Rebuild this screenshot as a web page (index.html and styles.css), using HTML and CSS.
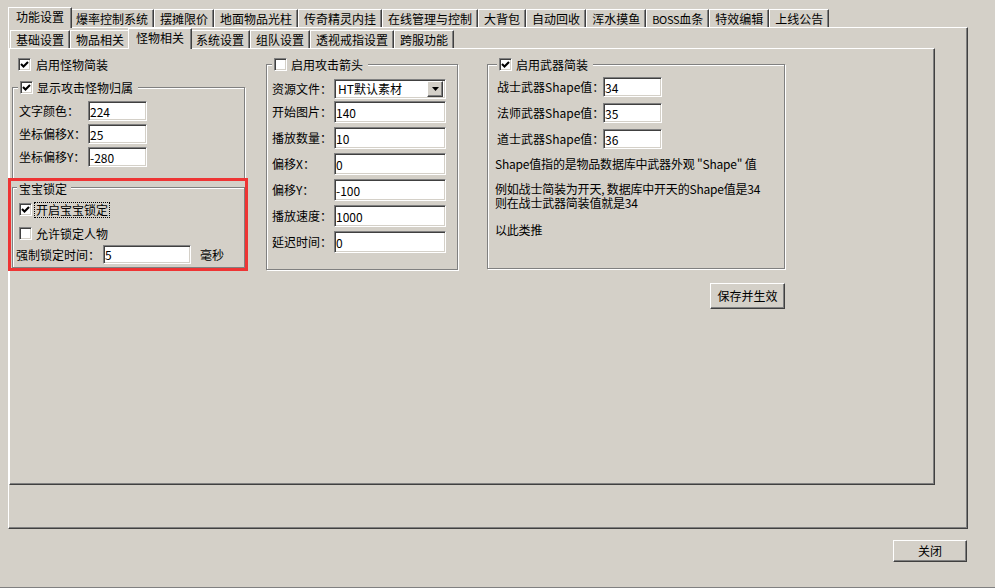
FILE: index.html
```html
<!DOCTYPE html>
<html lang="zh-CN">
<head>
  <meta charset="UTF-8" />
  <title>功能设置</title>
  <link rel="stylesheet" href="styles.css">
</head>
<body>
  <div class="window">
    <div class="tabs outer-tabs">
      <span class="tab on">功能设置</span>
      <span class="tab">爆率控制系统</span>
      <span class="tab">摆摊限价</span>
      <span class="tab">地面物品光柱</span>
      <span class="tab">传奇精灵内挂</span>
      <span class="tab">在线管理与控制</span>
      <span class="tab">大背包</span>
      <span class="tab">自动回收</span>
      <span class="tab">浑水摸鱼</span>
      <span class="tab"><span class="lat">BOSS</span>血条</span>
      <span class="tab">特效编辑</span>
      <span class="tab">上线公告</span>
    </div>

    <div class="panel outer-panel">
      <div class="tabs inner-tabs">
        <span class="tab">基础设置</span>
        <span class="tab">物品相关</span>
        <span class="tab on">怪物相关</span>
        <span class="tab">系统设置</span>
        <span class="tab">组队设置</span>
        <span class="tab">透视戒指设置</span>
        <span class="tab">跨服功能</span>
      </div>

      <div class="panel inner-panel">
        <div class="cols">

          <!-- left column -->
          <div class="col col-left">
            <label class="check first-check">
              <span class="cb"><svg width="13" height="13" viewBox="0 0 13 13"><polyline points="3,6 5.5,8.5 10,4" fill="none" stroke="#000" stroke-width="2.1"/></svg></span>
              启用怪物简装
            </label>

            <div class="group g-owner">
              <label class="check group-title">
                <span class="cb"><svg width="13" height="13" viewBox="0 0 13 13"><polyline points="3,6 5.5,8.5 10,4" fill="none" stroke="#000" stroke-width="2.1"/></svg></span>
                显示攻击怪物归属
              </label>
              <div class="group-body">
                <div class="row"><span class="lbl">文字颜色：</span><input class="edit" type="text" value="224"></div>
                <div class="row"><span class="lbl">坐标偏移X：</span><input class="edit" type="text" value="25"></div>
                <div class="row"><span class="lbl">坐标偏移Y：</span><input class="edit" type="text" value="-280"></div>
              </div>
            </div>

            <div class="group g-lock mark">
              <div class="group-title text-title">宝宝锁定</div>
              <div class="group-body">
                <label class="check">
                  <span class="cb"><svg width="13" height="13" viewBox="0 0 13 13"><polyline points="3,6 5.5,8.5 10,4" fill="none" stroke="#000" stroke-width="2.1"/></svg></span>
                  <span class="focus">开启宝宝锁定</span>
                </label>
                <label class="check">
                  <span class="cb"></span>
                  允许锁定人物
                </label>
                <div class="row lock-row">
                  <span class="lbl">强制锁定时间：</span><input class="edit" type="text" value="5"><span class="unit">毫秒</span>
                </div>
              </div>
            </div>
          </div>

          <!-- middle column -->
          <div class="col col-mid">
            <div class="group g-arrow">
              <label class="check group-title">
                <span class="cb"></span>
                启用攻击箭头
              </label>
              <div class="group-body">
                <div class="row combo-row">
                  <span class="lbl">资源文件：</span>
                  <div class="combo">
                    <span class="combo-text">HT默认素材</span>
                    <span class="drop"><svg width="7" height="4" viewBox="0 0 7 4"><polygon points="0,0 7,0 3.5,4" fill="#000"/></svg></span>
                  </div>
                </div>
                <div class="row"><span class="lbl">开始图片：</span><input class="edit" type="text" value="140"></div>
                <div class="row"><span class="lbl">播放数量：</span><input class="edit" type="text" value="10"></div>
                <div class="row"><span class="lbl">偏移X：</span><input class="edit" type="text" value="0"></div>
                <div class="row"><span class="lbl">偏移Y：</span><input class="edit" type="text" value="-100"></div>
                <div class="row"><span class="lbl">播放速度：</span><input class="edit" type="text" value="1000"></div>
                <div class="row"><span class="lbl">延迟时间：</span><input class="edit" type="text" value="0"></div>
              </div>
            </div>
          </div>

          <!-- right column -->
          <div class="col col-right">
            <div class="group g-weapon">
              <label class="check group-title">
                <span class="cb"><svg width="13" height="13" viewBox="0 0 13 13"><polyline points="3,6 5.5,8.5 10,4" fill="none" stroke="#000" stroke-width="2.1"/></svg></span>
                启用武器简装
              </label>
              <div class="group-body">
                <div class="row"><span class="lbl">战士武器Shape值：</span><input class="edit" type="text" value="34"></div>
                <div class="row"><span class="lbl">法师武器Shape值：</span><input class="edit" type="text" value="35"></div>
                <div class="row"><span class="lbl">道士武器Shape值：</span><input class="edit" type="text" value="36"></div>
                <p class="note">Shape值指的是物品数据库中武器外观 "Shape" 值</p>
                <p class="note two">例如战士简装为开天, 数据库中开天的Shape值是34<br>则在战士武器简装值就是34</p>
                <p class="note last">以此类推</p>
              </div>
            </div>
            <button class="btn save-btn">保存并生效</button>
          </div>

        </div>
      </div>
    </div>

    <div class="footer">
      <button class="btn close-btn">关闭</button>
    </div>
  </div>
</body>
</html>
```

FILE: styles.css
```css
* {
  box-sizing: border-box;
}

html, body {
  margin: 0;
  padding: 0;
}

body {
  background: #d4d0c8;
  font-family: "Noto Sans CJK SC", "Liberation Sans", sans-serif;
  font-size: 12px;
  line-height: 14px;
  color: #000;
}

.window {
  height: 588px;
  display: flex;
  flex-direction: column;
  padding: 7px 27px 0 8px;
  border-bottom: 1px solid #808080;
}

/* tabs */
.tabs {
  display: flex;
  align-items: flex-end;
  height: 20px;
  padding-left: 2px;
}

.inner-tabs {
  padding-left: 1px;
}

.tab {
  height: 18px;
  padding: 0 5px;
  border-top: 1px solid #fff;
  border-left: 1px solid #fff;
  border-right: 1px solid #404040;
  box-shadow: inset -1px 0 #808080;
  line-height: 17px;
  white-space: nowrap;
}

.tab.on {
  height: 21px;
  margin: 0 -2px -1px;
  padding: 0 7px;
  position: relative;
  z-index: 1;
  background: #d4d0c8;
  line-height: 18px;
}

.lat {
  font-size: 11px;
  letter-spacing: -0.3px;
}

/* panels */
.panel {
  border: 1px solid;
  border-color: #fff #404040 #404040 #fff;
  box-shadow: inset -1px -1px #808080;
}

.outer-panel {
  height: 502px;
  padding: 0 32px 43px 0;
  display: flex;
  flex-direction: column;
}

.inner-panel {
  flex: 1;
}

.cols {
  display: flex;
  align-items: flex-start;
  padding: 9px 0 0 2px;
}

.col-left {
  width: 233px;
}

.col-mid {
  width: 192px;
  margin-left: 21px;
}

.col-right {
  width: 298px;
  margin-left: 29px;
  display: flex;
  flex-direction: column;
}

/* group boxes */
.group {
  border: 1px solid #808080;
  box-shadow: inset 1px 1px #fff, 1px 1px #fff;
}

.group-title {
  width: fit-content;
  height: 13px;
  margin: -7px 0 0 5px;
  padding: 0 5px 0 2px;
  background: #d4d0c8;
}

.text-title {
  height: 14px;
  margin: -6px 0 0 4px;
  padding: 0 4px 0 2px;
}

.group-body {
  display: flex;
  flex-direction: column;
}

/* check boxes */
.check {
  display: flex;
  align-items: center;
  gap: 4px;
  height: 13px;
  white-space: nowrap;
}

.cb {
  width: 13px;
  height: 13px;
  flex: none;
  border: 1px solid;
  border-color: #808080 #fff #fff #808080;
  box-shadow: inset 1px 1px #404040, inset -1px -1px #d4d0c8;
  background: #fff;
  position: relative;
}

.cb svg {
  position: absolute;
  left: -1px;
  top: -1px;
}

.first-check {
  margin-left: 6px;
  gap: 5px;
}

.focus {
  outline: 1px dotted #000;
  padding: 0 1px;
  margin-left: -1px;
}

/* form rows */
.row {
  display: flex;
  align-items: center;
  white-space: nowrap;
}

.edit {
  font: inherit;
  color: #000;
  background: #fff;
  border: 1px solid;
  border-color: #808080 #fff #fff #808080;
  box-shadow: inset 1px 1px #404040, inset -1px -1px #d4d0c8;
  padding: 0 1px;
  margin: 0;
  outline: none;
}

/* left groups */
.g-owner {
  margin-top: 16px;
}

.g-owner .group-body {
  padding: 7px 0 12px 6px;
  gap: 3px;
}

.g-owner .row {
  height: 20px;
}

.g-owner .lbl {
  width: 69px;
}

.g-owner .edit {
  width: 59px;
  height: 20px;
}

.g-lock {
  margin-top: 7px;
}

.g-lock .group-body {
  padding: 7px 0 3px 6px;
}

.g-lock .check + .check {
  margin-top: 11px;
}

.lock-row {
  height: 19px;
  margin: 5px 0 0 -3px;
}

.lock-row .lbl {
  width: 87px;
}

.lock-row .edit {
  width: 88px;
  height: 19px;
}

.unit {
  margin-left: 9px;
}

.mark {
  position: relative;
}

.mark::after {
  content: "";
  position: absolute;
  left: -5px;
  right: -4px;
  top: -10px;
  bottom: -4px;
  border: 3px solid #ee3434;
  pointer-events: none;
}

/* middle group */
.g-arrow {
  margin-top: 6px;
}

.g-arrow .group-body {
  padding: 8px 10px 12px 5px;
}

.g-arrow .row {
  height: 22px;
  margin-bottom: 4px;
}

.g-arrow .lbl {
  width: 62px;
}

.g-arrow .edit {
  width: 112px;
  height: 22px;
}

.g-arrow .combo-row {
  height: 20px;
  margin-bottom: 2px;
}

.combo {
  width: 112px;
  height: 20px;
  display: flex;
  align-items: center;
  justify-content: space-between;
  padding: 2px;
  border: 1px solid;
  border-color: #808080 #fff #fff #808080;
  box-shadow: inset 1px 1px #404040, inset -1px -1px #d4d0c8;
  background: #fff;
}

.combo-text {
  padding-left: 1px;
}

.drop {
  width: 16px;
  height: 16px;
  display: flex;
  align-items: center;
  justify-content: center;
  background: #d4d0c8;
  border: 1px solid;
  border-color: #fff #404040 #404040 #fff;
  box-shadow: inset -1px -1px #808080;
}

/* right group */
.g-weapon {
  margin-top: 6px;
}

.g-weapon .group-title {
  margin-left: 9px;
}

.g-weapon .group-body {
  padding: 6px 0 31px 9px;
}

.g-weapon .row {
  height: 20px;
  margin-bottom: 6px;
}

.g-weapon .lbl {
  width: 106px;
}

.g-weapon .edit {
  width: 59px;
  height: 20px;
}

.note {
  margin: 2px 0 0 -2px;
  line-height: 14px;
  white-space: nowrap;
  letter-spacing: -0.2px;
}

.note.two {
  margin-top: 11px;
}

.note.last {
  margin-top: 13px;
}

/* buttons */
.btn {
  font: inherit;
  color: #000;
  background: #d4d0c8;
  border: 1px solid;
  border-color: #fff #404040 #404040 #fff;
  box-shadow: inset -1px -1px #808080;
  padding: 0;
  margin: 0;
}

.save-btn {
  align-self: flex-end;
  width: 75px;
  height: 26px;
  margin-top: 14px;
}

.footer {
  display: flex;
  justify-content: flex-end;
  padding-top: 11px;
}

.close-btn {
  width: 74px;
  height: 22px;
  margin-right: 1px;
}
```
